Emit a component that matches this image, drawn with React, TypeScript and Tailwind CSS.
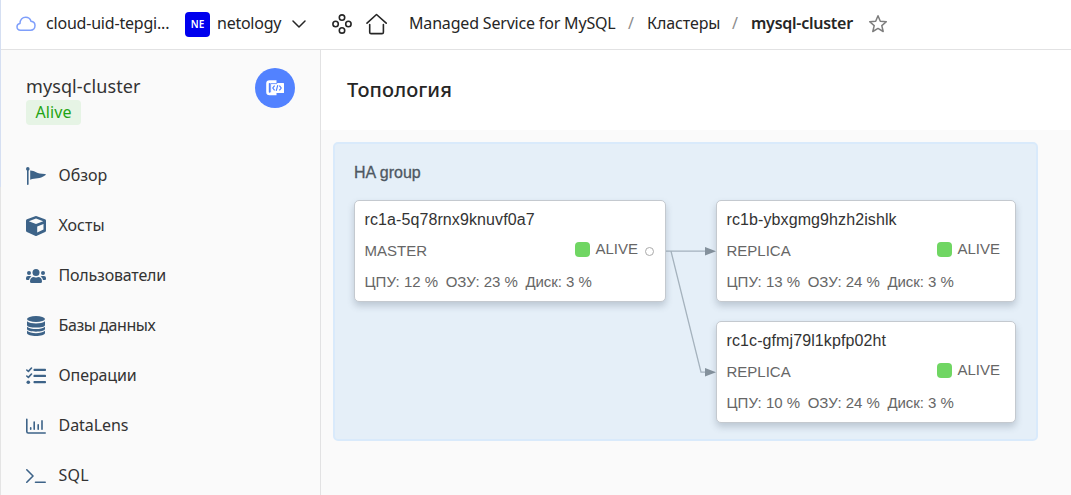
import type { ReactNode } from "react";

type HostInfo = {
  name: string;
  role: string;
  cpu: number;
  ram: number;
  disk: number;
  selector?: boolean;
};

const master: HostInfo = { name: "rc1a-5q78rnx9knuvf0a7", role: "MASTER", cpu: 12, ram: 23, disk: 3, selector: true };
const replicas: HostInfo[] = [
  { name: "rc1b-ybxgmg9hzh2ishlk", role: "REPLICA", cpu: 13, ram: 24, disk: 3 },
  { name: "rc1c-gfmj79l1kpfp02ht", role: "REPLICA", cpu: 10, ram: 24, disk: 3 },
];

function CloudIcon() {
  return (
    <svg className="h-[16px] w-[20px] shrink-0" viewBox="0 0 20 16" fill="none" stroke="#7f9ffb" strokeWidth="1.5" strokeLinejoin="round">
      <path d="M4.6 14.2C2.4 14.2 1 12.8 1 10.8C1 9 2.2 7.7 4 7.4C3.9 3.7 6.3 1.2 9.7 1.2C12.4 1.2 14.3 2.7 15 5.2C17.5 5.5 19 7.2 19 9.6C19 12.3 17.2 14.2 14.6 14.2Z" />
    </svg>
  );
}

function ServicesIcon() {
  return (
    <svg className="h-5 w-5 shrink-0" viewBox="0 0 20 20" fill="none" stroke="#262626" strokeWidth="1.6">
      <circle cx="10" cy="3.6" r="2.7" />
      <circle cx="3.6" cy="10" r="2.7" />
      <circle cx="16.4" cy="10" r="2.7" />
      <circle cx="10" cy="16.4" r="2.7" />
    </svg>
  );
}

function HomeIcon() {
  return (
    <svg className="h-[22px] w-[22px] shrink-0" viewBox="0 0 22 22" fill="none" stroke="#262626" strokeWidth="1.6" strokeLinecap="round" strokeLinejoin="round">
      <path d="M1 10.2L10.5 1.5L20.2 10.2M3.7 11.5V19.2Q3.7 20.6 5.1 20.6H16Q17.4 20.6 17.4 19.2V11.5" />
    </svg>
  );
}

function StarIcon() {
  return (
    <svg className="h-5 w-5 shrink-0" viewBox="0 0 20 20" fill="none" stroke="#7d7d7d" strokeWidth="1.5" strokeLinejoin="round">
      <path d="M10 1.8L12.3 7.2L18.3 7.7L13.8 11.6L15.2 17.5L10 14.4L4.8 17.5L6.2 11.6L1.7 7.7L7.7 7.2Z" />
    </svg>
  );
}

function MenuIcon({ children }: { children: ReactNode }) {
  return (
    <svg className="h-5 w-5 shrink-0 text-[#3d6388]" viewBox="0 0 20 20" fill="currentColor">
      {children}
    </svg>
  );
}

const menu = [
  {
    label: "Обзор",
    track: "tracking-normal",
    icon: (
      <MenuIcon>
        <circle cx="1.8" cy="2.9" r="1.8" />
        <path d="M1 3H2.6V18.3Q2.6 19 1.8 19Q1 19 1 18.3ZM4.2 4.4C8.5 4.2 10.5 8 19.3 7.9Q20.3 8.6 19.3 9.3C13.5 13.4 9.5 11.8 4.2 13.7Z" />
      </MenuIcon>
    ),
  },
  {
    label: "Хосты",
    track: "tracking-normal",
    icon: (
      <MenuIcon>
        <path fillRule="evenodd" d="M9.1.2Q10 -.1 10.9.2L19 3.3Q20 3.7 20 4.8V14.4Q20 15.4 19.1 15.9L10.9 19.7Q10 20.1 9.1 19.7L.9 15.9Q0 15.4 0 14.4V4.8Q0 3.7 1 3.3ZM10 2.6L2.8 5.2L10 8.1L17.2 5.2ZM11.2 10.4V16.5L17.5 13.5V7.9Z" />
      </MenuIcon>
    ),
  },
  {
    label: "Пользователи",
    track: "tracking-[-0.2px]",
    icon: (
      <MenuIcon>
        <circle cx="10" cy="6.5" r="3.5" />
        <circle cx="3" cy="7" r="2" />
        <circle cx="17" cy="7" r="2" />
        <path d="M4 15.5C4 12.5 5.5 11 8 11Q10 12 12 11C14.5 11 16 12.5 16 15.5Q16 17 14.5 17H5.5Q4 17 4 15.5ZM0 12Q0 10 2 10H4Q4.8 10 5.4 10.6Q3.3 11.8 3 14H1Q0 14 0 13ZM20 12Q20 10 18 10H16Q15.2 10 14.6 10.6Q16.7 11.8 17 14H19Q20 14 20 13Z" />
      </MenuIcon>
    ),
  },
  {
    label: "Базы данных",
    track: "tracking-[-0.42px]",
    icon: (
      <MenuIcon>
        <ellipse cx="10" cy="3" rx="9" ry="3" />
        <path d="M1 5.2C4.5 8.2 15.5 8.2 19 5.2V8.9C19 12.5 1 12.5 1 8.9ZM1 10.7C4.5 13.8 15.5 13.8 19 10.7V13C19 16.5 1 16.5 1 13ZM1 14.8C4.5 18 15.5 18 19 14.8V17C19 21 1 21 1 17Z" />
      </MenuIcon>
    ),
  },
  {
    label: "Операции",
    track: "tracking-[-0.1px]",
    icon: (
      <MenuIcon>
        <path d="M.8 4L2.4 5.4L5.5 2M.8 10L2.4 11.4L5.5 8" fill="none" stroke="currentColor" strokeWidth="1.6" strokeLinecap="round" strokeLinejoin="round" />
        <circle cx="2.3" cy="16.2" r="1.8" />
        <path d="M8.2 2.7H19.2Q20 2.7 20 3.4V4.3Q20 5 19.2 5H8.2Q7.5 5 7.5 4.3V3.4Q7.5 2.7 8.2 2.7ZM8.2 8.8H19.2Q20 8.8 20 9.5V10.4Q20 11.1 19.2 11.1H8.2Q7.5 11.1 7.5 10.4V9.5Q7.5 8.8 8.2 8.8ZM8.2 15H19.2Q20 15 20 15.7V16.6Q20 17.3 19.2 17.3H8.2Q7.5 17.3 7.5 16.6V15.7Q7.5 15 8.2 15Z" />
      </MenuIcon>
    ),
  },
  {
    label: "DataLens",
    track: "tracking-[-0.05px]",
    icon: (
      <MenuIcon>
        <path d="M.8 3.2V15.6Q.8 17 2.2 17H19.2M4.7 11.7V13.2M8.2 6V13.2M12.2 8.7V13.2M16 4.9V13.2" fill="none" stroke="currentColor" strokeWidth="1.6" strokeLinecap="round" />
      </MenuIcon>
    ),
  },
  {
    label: "SQL",
    track: "tracking-[0.2px]",
    icon: (
      <MenuIcon>
        <path d="M.8 3.8L7 10L.8 16.2M9.5 16.3H19.2" fill="none" stroke="currentColor" strokeWidth="1.6" strokeLinecap="round" strokeLinejoin="round" />
      </MenuIcon>
    ),
  },
];

function Header() {
  return (
    <header className="flex h-[50px] shrink-0 items-center border-b border-[#e2e2e3] bg-white pb-px pl-[15px] text-base text-[#262626]">
      <CloudIcon />
      <span className="ml-[10px] w-[139px] whitespace-nowrap pb-0.5 tracking-[-0.2px]">cloud-uid-tepgi...</span>
      <span className="flex h-[25px] w-[25px] items-center justify-center rounded-[4px] bg-[#0000ee] text-[10px] font-semibold text-white">NE</span>
      <span className="ml-[7px] w-[75px] whitespace-nowrap pb-0.5 tracking-[-0.25px]">netology</span>
      <svg className="h-2 w-[14px] shrink-0" viewBox="0 0 14 8" fill="none" stroke="#262626" strokeWidth="1.5" strokeLinecap="round" strokeLinejoin="round">
        <path d="M1 1L7 7L13 1" />
      </svg>
      <span className="ml-[26px] flex items-center gap-[14px]">
        <ServicesIcon />
        <HomeIcon />
      </span>
      <nav className="ml-[21px] flex items-center whitespace-nowrap pb-0.5">
        <span className="w-[219px] tracking-[-0.18px]">Managed Service for MySQL</span>
        <span className="w-[19px] text-[#8c8c8c]">/</span>
        <span className="w-[85px] tracking-[-0.1px]">Кластеры</span>
        <span className="w-[19px] text-[#8c8c8c]">/</span>
        <span className="w-[117px] font-semibold tracking-[-0.25px]">mysql-cluster</span>
      </nav>
      <StarIcon />
    </header>
  );
}

function Sidebar() {
  return (
    <aside className="flex w-[320px] shrink-0 flex-col border-r border-[#e2e2e3] bg-[#fafafa] text-[#333]">
      <div className="flex h-[101px] shrink-0 items-start justify-between pl-[25px] pr-[25px] pt-[18px]">
        <div className="pt-[5px]">
          <div className="mb-px text-[18px] leading-[26px] tracking-[0.1px]">mysql-cluster</div>
          <div className="flex h-[25px] w-[55px] items-center justify-center rounded-[4px] bg-[#e6f4e5] pb-0.5 text-base tracking-[0.1px] text-[#1fa414]">Alive</div>
        </div>
        <div className="flex h-10 w-10 items-center justify-center rounded-full bg-[#5282ff]">
          <svg className="h-[16px] w-[18px]" viewBox="0 0 18 16" fill="none">
            <path d="M10.5 1.6H3.6Q1.5 1.6 1.5 3.6V12Q1.5 14 3.6 14H10.5" stroke="#fff" strokeWidth="2.6" />
            <rect x="4" y="3" width="14" height="10" rx=".5" fill="#fff" />
            <path d="M4.6 12.3V3.6H11.2" stroke="#5282ff" strokeWidth=".8" />
            <path d="M8.6 5.6L6.8 8L8.6 10.4M13.4 5.6L15.2 8L13.4 10.4M11.8 5.2L10.2 10.8" stroke="#5282ff" strokeWidth="1.2" />
          </svg>
        </div>
      </div>
      <ul className="flex flex-col">
        {menu.map((item) => (
          <li key={item.label} className="flex h-[50px] shrink-0 items-center pl-[25px] text-base">
            {item.icon}
            <span className={"pb-0.5 pl-[12.5px]"}>
              <span className={item.track}>{item.label}</span>
            </span>
          </li>
        ))}
      </ul>
    </aside>
  );
}

function HostCard({ host }: { host: HostInfo }) {
  return (
    <div className="flex h-[102px] flex-col rounded-[5px] border border-[#c4c9cf] bg-white pb-[4px] pl-[9.5px] pt-[3px] font-['Liberation_Sans',sans-serif] text-[15px] text-[#666] shadow-[0_4px_7px_rgba(50,70,90,0.23)]">
      <div className="h-[31px] shrink-0 text-base leading-[31px] tracking-[0.1px] text-[#333]">{host.name}</div>
      <div className={host.selector ? "flex h-[31px] shrink-0 items-center pr-[11px]" : "flex h-[31px] shrink-0 items-center pr-[15px]"}>
        <span className="grow pt-0.5">{host.role}</span>
        <span className="mb-[3px] mr-[5px] h-[15px] w-[15px] rounded-[4px] bg-[#70d663]" />
        <span className="mb-[2px]">ALIVE</span>
        {host.selector && <span className="ml-[7px] mt-px h-[9px] w-[9px] rounded-full border border-[#aaa]" />}
      </div>
      <div className="flex h-[31px] shrink-0 items-center gap-[7.5px] whitespace-nowrap pt-0.5">
        <span>ЦПУ: {host.cpu} %</span>
        <span>ОЗУ: {host.ram} %</span>
        <span className="tracking-[-0.05px]">Диск: {host.disk} %</span>
      </div>
    </div>
  );
}

function Links() {
  return (
    <svg className="h-[223px] w-[50px]" viewBox="0 0 50 223" fill="none">
      <path d="M0 51.2H42M5 51.2L35 172.2H42" stroke="#6f7f8d" strokeOpacity=".55" strokeWidth="1.3" />
      <path d="M39 47L50 51.2L39 55.4ZM39 168L50 172.2L39 176.4Z" fill="#84919c" />
    </svg>
  );
}

export default function App() {
  return (
    <div className="flex h-[495px] w-[1071px] overflow-hidden bg-white font-['Noto_Sans','Open_Sans',sans-serif]">
      <div className="flex w-px shrink-0 flex-col">
        <div className="h-[187px] bg-[#d5dff2]" />
        <div className="grow bg-[#e4e4e4]" />
      </div>
      <div className="flex min-w-0 grow flex-col">
        <Header />
        <div className="flex min-h-0 grow">
          <Sidebar />
          <main className="flex grow flex-col bg-[#fafafa]">
            <h1 className="flex h-[80px] shrink-0 items-center bg-white pl-[26px] text-xl font-medium tracking-[0.07px] text-[#262626]">Топология</h1>
            <section className="ml-3 mt-3 h-[299px] w-[705px] rounded-[5px] border-2 border-[#d9eafb] bg-[#e5eff8] pl-[19px]">
              <h2 className="flex h-[56px] items-center pt-px font-['Liberation_Sans',sans-serif] text-base text-[#4e5862] [-webkit-text-stroke:0.3px_#4e5862]">HA group</h2>
              <div className="grid grid-cols-[312px_50px_300px] items-start">
                <HostCard host={master} />
                <Links />
                <div className="flex flex-col gap-[19px]">
                  {replicas.map((host) => (
                    <HostCard key={host.name} host={host} />
                  ))}
                </div>
              </div>
            </section>
          </main>
        </div>
      </div>
    </div>
  );
}
